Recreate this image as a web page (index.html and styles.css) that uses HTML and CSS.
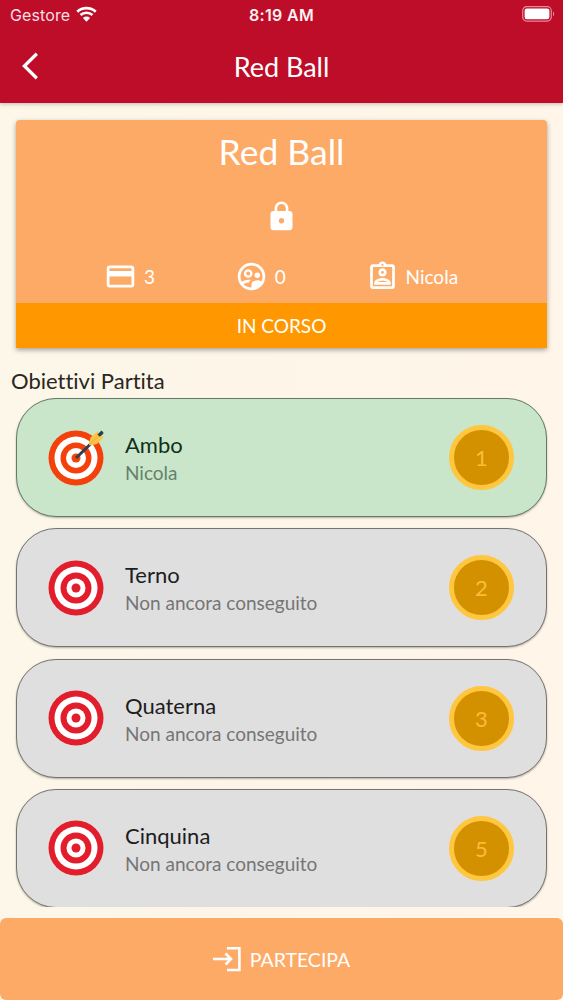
FILE: index.html
```
<!DOCTYPE html>
<html lang="it">
<head>
    <meta charset="UTF-8">
    <meta name="viewport" content="width=device-width, initial-scale=1.0">
    <title>Red Ball</title>
    <link rel="stylesheet" href="styles.css">
</head>
<body>

<header class="header">
    <div class="status-bar">
        <div class="carrier">
            <span>Gestore</span>
            <svg class="wifi" viewBox="0 0 20 15">
                <path d="M1.2 5.3C6 .7 14 .7 18.8 5.3M4.3 8.5c3.2-3 8.2-3 11.4 0" fill="none" stroke="#fff" stroke-width="2.5"/>
                <path d="M6.6 11.2c2-1.7 4.8-1.7 6.8 0L10 14.8z" fill="#fff"/>
            </svg>
        </div>
        <span class="time">8:19 AM</span>
        <svg class="battery" viewBox="0 0 33 16">
            <rect x=".7" y=".7" width="28.6" height="14.4" rx="4" fill="none" stroke="#e58b98" stroke-width="1.2"/>
            <rect x="2.6" y="2.6" width="24.8" height="10.6" rx="2.2" fill="#fff"/>
            <path d="M31 5.5c1.7.8 1.7 4 0 4.8z" fill="#e58b98"/>
        </svg>
    </div>
    <div class="nav-bar">
        <svg class="back" viewBox="0 0 18 28"><path d="M15.8 1.8L3.4 14l12.4 12.2" fill="none" stroke="#fff" stroke-width="3.3"/></svg>
        <h1>Red Ball</h1>
    </div>
</header>

<main class="content">
    <section class="game-card">
        <h2>Red Ball</h2>
        <svg class="icon lock" viewBox="0 0 24 24"><path d="M18 8h-1V6c0-2.76-2.24-5-5-5S7 3.24 7 6v2H6c-1.1 0-2 .9-2 2v10c0 1.1.9 2 2 2h12c1.1 0 2-.9 2-2V10c0-1.1-.9-2-2-2zm-6 9c-1.1 0-2-.9-2-2s.9-2 2-2 2 .9 2 2-.9 2-2 2zm3.1-9H8.9V6c0-1.71 1.39-3.1 3.1-3.1 1.71 0 3.1 1.39 3.1 3.1v2z"/></svg>
        <div class="stats">
            <div class="stat">
                <svg class="icon" viewBox="0 0 24 24"><path d="M20 4H4c-1.11 0-1.99.89-1.99 2L2 18c0 1.11.89 2 2 2h16c1.11 0 2-.89 2-2V6c0-1.11-.89-2-2-2zm0 14H4v-6h16v6zm0-10H4V6h16v2z"/></svg>
                <span>3</span>
            </div>
            <div class="stat">
                <svg class="icon" viewBox="0 0 24 24">
                    <circle cx="12" cy="12" r="9" fill="none" stroke="#fff" stroke-width="2"/>
                    <circle cx="9.6" cy="9.8" r="2.3" fill="none" stroke="#fff" stroke-width="1.7"/>
                    <circle cx="16.2" cy="11" r="2"/>
                    <path d="M4.6 16.2c1.3-1.3 3.2-1.9 5-1.9.7 0 1.4.1 2.1.3-.8.5-1.4 1-1.7 1.7-1.5 0-3 .6-4 1.6zM12 21v-3.7c0-1.7 2.6-2.5 4.2-2.5 1.3 0 2.9.5 3.7 1.3C18.5 19 15.5 21 12 21z"/>
                </svg>
                <span>0</span>
            </div>
            <div class="stat">
                <svg class="icon" viewBox="0 0 24 24">
                    <path fill-rule="evenodd" d="M19 3h-4.18C14.4 1.84 13.3 1 12 1s-2.4.84-2.82 2H5c-1.1 0-2 .9-2 2v14c0 1.1.9 2 2 2h14c1.1 0 2-.9 2-2V5c0-1.1-.9-2-2-2zm-7-.25c.41 0 .75.34.75.75s-.34.75-.75.75-.75-.34-.75-.75.34-.75.75-.75zM19 19H5V5h14z"/>
                    <path d="M12 12c1.65 0 3-1.35 3-3s-1.35-3-3-3-3 1.35-3 3 1.35 3 3 3zm0-4c.55 0 1 .45 1 1s-.45 1-1 1-1-.45-1-1 .45-1 1-1zm6 8.58c0-2.5-3.97-3.58-6-3.58s-6 1.08-6 3.58V18h12v-1.42zM8.48 16c.74-.51 2.23-1 3.52-1s2.78.49 3.52 1H8.48z"/>
                </svg>
                <span>Nicola</span>
            </div>
        </div>
        <div class="game-status">IN CORSO</div>
    </section>

    <h3>Obiettivi Partita</h3>
    <div class="goals">
        <div class="goal done">
            <svg class="target" viewBox="0 0 58 58">
                <circle cx="28" cy="30" r="27.5" fill="#f4410b"/>
                <circle cx="28" cy="30" r="21.5" fill="#fff"/>
                <circle cx="28" cy="30" r="15.5" fill="#f4410b"/>
                <circle cx="28" cy="30" r="10" fill="#fff"/>
                <circle cx="28" cy="30" r="4.5" fill="#f4410b"/>
                <path d="M28 30L54.5 4.5" stroke="#2c3e50" stroke-width="3"/>
                <path d="M41 16.5l1.5-7 7.5-6.500.5 5 5.5.8-7 7.2-7 1.5z" fill="#ffc343"/>
                <path d="M42 16L51 7" stroke="#e9b64d" stroke-width="1.5"/>
                <path d="M50.5 7.5L54.5 3.5" stroke="#2c3e50" stroke-width="3"/>
            </svg>
            <div class="goal-text">
                <p class="name">Ambo</p>
                <p class="winner">Nicola</p>
            </div>
            <span class="coin">1</span>
        </div>
        <div class="goal">
            <svg class="target" viewBox="0 0 58 58">
                <circle cx="28" cy="30" r="27.5" fill="#e21d2c"/>
                <circle cx="28" cy="30" r="21.5" fill="#fff"/>
                <circle cx="28" cy="30" r="15.5" fill="#e21d2c"/>
                <circle cx="28" cy="30" r="9.5" fill="#fff"/>
                <circle cx="28" cy="30" r="4.5" fill="#e21d2c"/>
            </svg>
            <div class="goal-text">
                <p class="name">Terno</p>
                <p class="winner">Non ancora conseguito</p>
            </div>
            <span class="coin">2</span>
        </div>
        <div class="goal">
            <svg class="target" viewBox="0 0 58 58">
                <circle cx="28" cy="30" r="27.5" fill="#e21d2c"/>
                <circle cx="28" cy="30" r="21.5" fill="#fff"/>
                <circle cx="28" cy="30" r="15.5" fill="#e21d2c"/>
                <circle cx="28" cy="30" r="9.5" fill="#fff"/>
                <circle cx="28" cy="30" r="4.5" fill="#e21d2c"/>
            </svg>
            <div class="goal-text">
                <p class="name">Quaterna</p>
                <p class="winner">Non ancora conseguito</p>
            </div>
            <span class="coin">3</span>
        </div>
        <div class="goal">
            <svg class="target" viewBox="0 0 58 58">
                <circle cx="28" cy="30" r="27.5" fill="#e21d2c"/>
                <circle cx="28" cy="30" r="21.5" fill="#fff"/>
                <circle cx="28" cy="30" r="15.5" fill="#e21d2c"/>
                <circle cx="28" cy="30" r="9.5" fill="#fff"/>
                <circle cx="28" cy="30" r="4.5" fill="#e21d2c"/>
            </svg>
            <div class="goal-text">
                <p class="name">Cinquina</p>
                <p class="winner">Non ancora conseguito</p>
            </div>
            <span class="coin">5</span>
        </div>
    </div>
</main>

<button class="join">
    <svg class="join-icon" viewBox="0 0 28 26"><path d="M0 13h17M12.500 7.500l5.500 5.500-5.500 5.500M14 2.200h12.400v21.800H14" fill="none" stroke="#fff" stroke-width="2.600"/></svg>
    <span>PARTECIPA</span>
</button>

</body>
</html>
```
FILE: styles.css
```
* {
    box-sizing: border-box;
}
body {
    font-family: 'Lato', sans-serif;
    font-variant-ligatures: none;
    background: linear-gradient(90deg, #fcf7e8 0%, #fff5e9 100%);
    display: flex;
    flex-direction: column;
    height: 1000px;
    margin: 0;
    overflow: hidden;
}
h1, h2, h3, p {
    margin: 0;
    font-weight: normal;
}
.header {
    background: #bd0d29;
    color: white;
    height: 103px;
    flex: none;
    box-shadow: 0 1px 4px rgba(0, 0, 0, 0.25);
}
.status-bar {
    display: grid;
    grid-template-columns: 1fr auto 1fr;
    align-items: center;
    height: 29px;
    padding: 0 8px 0 10px;
    font-family: 'Inter', sans-serif;
    font-size: 16px;
}
.carrier {
    display: flex;
    align-items: center;
    gap: 6px;
    color: #fbdfe2;
    letter-spacing: 0.1px;
}
.wifi {
    width: 21px;
    height: 16px;
    margin-top: -2px;
}
.time {
    font-weight: 600;
    color: #fff0f1;
    letter-spacing: 0.3px;
    margin-right: 2px;
}
.battery {
    width: 33px;
    height: 16px;
    justify-self: end;
    margin-top: -1px;
}
.nav-bar {
    display: grid;
    grid-template-columns: 1fr auto 1fr;
    align-items: center;
    height: 74px;
    padding: 0 21px;
}
.back {
    width: 18px;
    height: 28px;
    margin-top: -1px;
}
.nav-bar h1 {
    font-size: 27px;
}
.content {
    height: 804px;
    overflow: hidden;
    padding: 17px 16px 0;
}
.game-card {
    display: flex;
    flex-direction: column;
    align-items: center;
    height: 228px;
    background: #fdaa67;
    color: white;
    border-radius: 4px 4px 0 0;
    box-shadow: 0 2px 5px rgba(0, 0, 0, 0.35);
}
.game-card h2 {
    font-size: 35.500px;
    line-height: 42px;
    margin-top: 11px;
}
.icon {
    width: 33px;
    height: 33px;
    fill: white;
}
.lock {
    margin-top: 27px;
}
.stats {
    display: flex;
    justify-content: space-around;
    align-self: stretch;
    margin-top: 27px;
    padding: 0 49px 0 48px;
}
.stat {
    display: flex;
    align-items: center;
    gap: 7px;
    font-size: 19px;
}
.game-status {
    align-self: stretch;
    margin-top: auto;
    height: 45px;
    line-height: 46px;
    background: #ff9800;
    text-align: center;
    font-size: 19px;
}
.content h3 {
    margin: 20px 0 4px -5px;
    font-size: 22px;
    line-height: 26px;
    color: #2a2622;
}
.goals {
    display: flex;
    flex-direction: column;
    gap: 11.3px;
}
.goal {
    display: flex;
    align-items: center;
    flex: none;
    height: 119px;
    padding: 0 32px 0 31px;
    background: #e0dfe0;
    border: 1.5px solid #77736f;
    border-radius: 40px;
    box-shadow: 0 1px 2px rgba(0, 0, 0, 0.3);
}
.goal.done {
    background: #c9e6cb;
    border-color: #66796a;
}
.target {
    width: 58px;
    height: 58px;
    margin-top: -2px;
}
.goal-text {
    flex: 1;
    margin-left: 19px;
    margin-top: 3px;
}
.name {
    font-size: 22px;
    line-height: 28px;
    color: #1d1d1d;
}
.winner {
    font-size: 19px;
    line-height: 28px;
    color: #757575;
}
.done .name {
    color: #12301a;
}
.done .winner {
    color: #66816b;
}
.coin {
    width: 65px;
    height: 65px;
    line-height: 56px;
    border: 5.5px solid #ffc63f;
    border-radius: 50%;
    background: #d39100;
    color: #f9bd3a;
    text-align: center;
    font-size: 22px;
}
.join {
    display: flex;
    justify-content: center;
    align-items: center;
    gap: 9px;
    height: 82px;
    margin-top: auto;
    flex: none;
    border: none;
    border-radius: 6px;
    background: #fdaa67;
    color: white;
    font-family: inherit;
    font-size: 19.5px;
}
.join-icon {
    width: 28px;
    height: 26px;
}
```
